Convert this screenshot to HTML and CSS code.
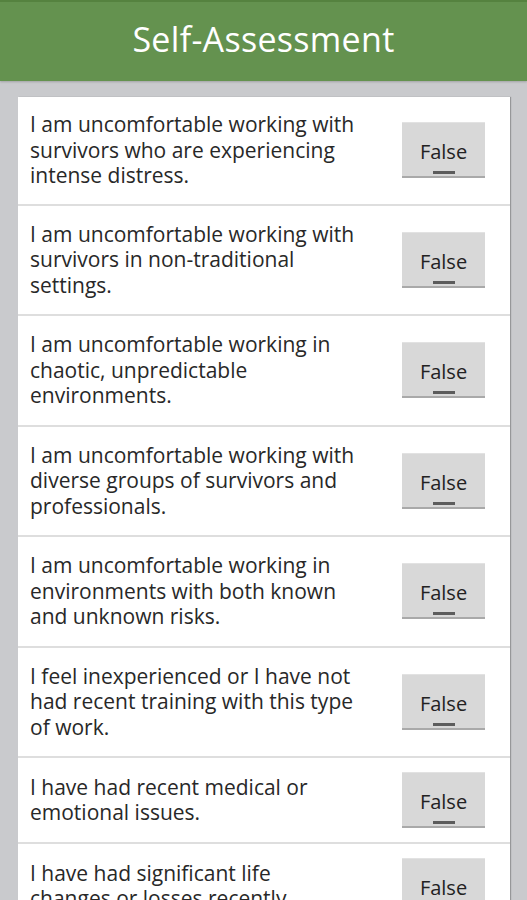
FILE: index.html
```html
<!DOCTYPE html>
<html lang="en">
  <head>
    <meta charset="UTF-8" />
    <meta name="viewport" content="width=device-width, initial-scale=1.0" />
    <title>Self-Assessment</title>
    <link rel="stylesheet" href="styles.css">
  </head>
  <body>
    <header class="topbar">
      <h1>Self-Assessment</h1>
    </header>
    <main class="lista">
      <div class="item">
        <p class="pergunta">I am uncomfortable working with<br>survivors who are experiencing<br>intense distress.</p>
        <button class="toggle">False<span class="marca"></span></button>
      </div>
      <div class="item">
        <p class="pergunta">I am uncomfortable working with<br>survivors in non-traditional<br>settings.</p>
        <button class="toggle">False<span class="marca"></span></button>
      </div>
      <div class="item">
        <p class="pergunta">I am uncomfortable working in<br>chaotic, unpredictable<br>environments.</p>
        <button class="toggle">False<span class="marca"></span></button>
      </div>
      <div class="item">
        <p class="pergunta">I am uncomfortable working with<br>diverse groups of survivors and<br>professionals.</p>
        <button class="toggle">False<span class="marca"></span></button>
      </div>
      <div class="item">
        <p class="pergunta">I am uncomfortable working in<br>environments with both known<br>and unknown risks.</p>
        <button class="toggle">False<span class="marca"></span></button>
      </div>
      <div class="item">
        <p class="pergunta">I feel inexperienced or I have not<br>had recent training with this type<br>of work.</p>
        <button class="toggle">False<span class="marca"></span></button>
      </div>
      <div class="item">
        <p class="pergunta">I have had recent medical or<br>emotional issues.</p>
        <button class="toggle">False<span class="marca"></span></button>
      </div>
      <div class="item">
        <p class="pergunta">I have had significant life<br>changes or losses recently.</p>
        <button class="toggle">False<span class="marca"></span></button>
      </div>
    </main>
  </body>
</html>
```

FILE: styles.css
```css
* {
  margin: 0;
  padding: 0;
  box-sizing: border-box;
  font-family: "Open Sans", "Liberation Sans", sans-serif;
}

body {
  background-color: #c9cacd;
  color: #222;
}

.topbar {
  display: flex;
  justify-content: center;
  align-items: center;
  height: 81px;
  padding-bottom: 5px;
  background-color: #64924f;
  border-top: 2px solid #55823f;
  box-shadow: 0 1px 2px rgba(0, 0, 0, 0.2);
}

.topbar h1 {
  color: #fff;
  font-size: 34px;
  font-weight: normal;
  letter-spacing: 0.3px;
}

.lista {
  margin: 16px 17px 0 18px;
  background-color: #fff;
  box-shadow: 1px 0 1px rgba(0, 0, 0, 0.25);
}

.item {
  display: flex;
  justify-content: space-between;
  align-items: center;
  padding: 14px 25px 14px 12px;
  border-bottom: 2px solid #dedede;
}

.item:first-child {
  padding-top: 13px;
  padding-bottom: 13px;
}

.pergunta {
  padding: 2px 0;
  font-size: 21px;
  line-height: 25.5px;
  color: #282828;
}

.toggle {
  display: flex;
  flex-direction: column;
  align-items: center;
  justify-content: flex-end;
  flex-shrink: 0;
  width: 83px;
  height: 56px;
  padding-bottom: 2px;
  font-size: 20px;
  color: #222;
  background-color: #d8d8d8;
  border: none;
  border-top: 1px solid #e2e2e2;
  border-bottom: 2px solid #a9a9a9;
}

.marca {
  display: block;
  width: 22px;
  height: 3px;
  margin-top: 6px;
  background-color: #5c5c5c;
}
```
